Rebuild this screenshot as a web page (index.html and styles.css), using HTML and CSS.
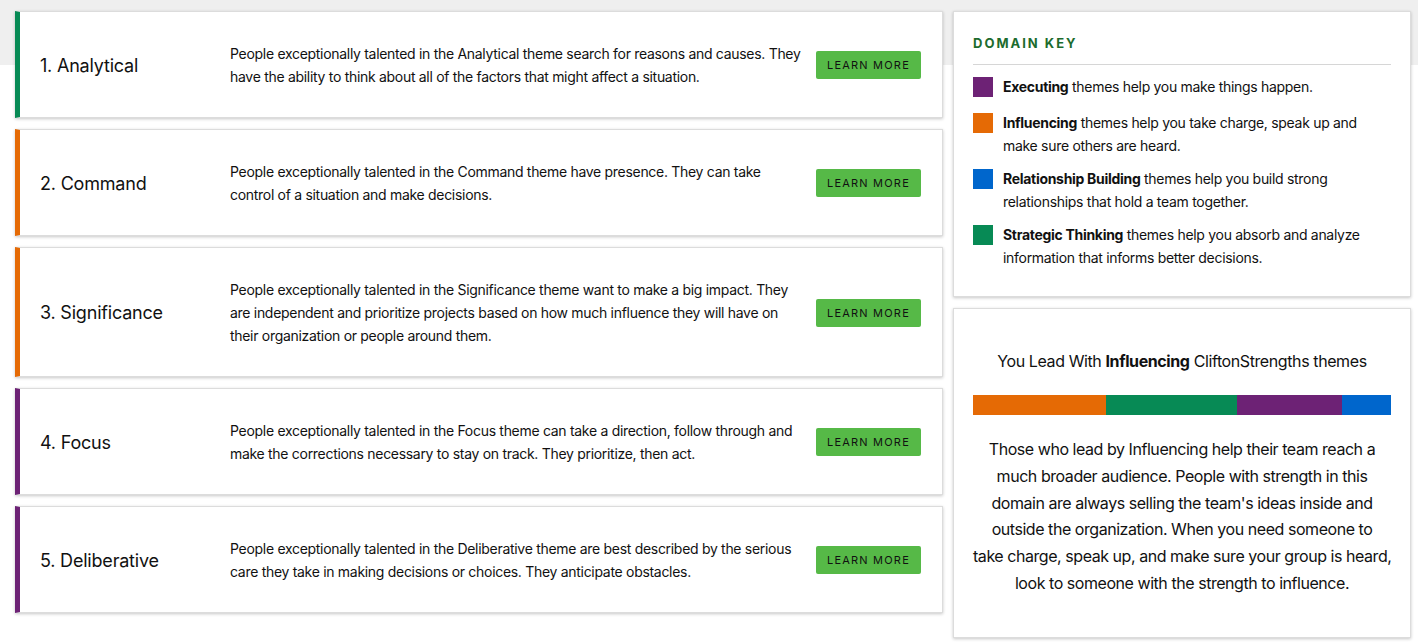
FILE: index.html
```html
<!DOCTYPE html>
<html lang="en">
<head>
  <meta charset="UTF-8">
  <meta name="viewport" content="width=device-width, initial-scale=1.0">
  <title>CliftonStrengths Themes</title>
  <link rel="stylesheet" href="styles.css">
</head>
<body>
  <div class="page">
    <div class="themes">
      <div class="theme strategic">
        <div class="theme-name">1. Analytical</div>
        <p class="theme-desc">People exceptionally talented in the Analytical theme search for reasons and causes. They have the ability to think about all of the factors that might affect a situation.</p>
        <a class="learn-btn" href="#">Learn more</a>
      </div>
      <div class="theme influencing">
        <div class="theme-name">2. Command</div>
        <p class="theme-desc">People exceptionally talented in the Command theme have presence. They can take control of a situation and make decisions.</p>
        <a class="learn-btn" href="#">Learn more</a>
      </div>
      <div class="theme influencing">
        <div class="theme-name">3. Significance</div>
        <p class="theme-desc">People exceptionally talented in the Significance theme want to make a big impact. They are independent and prioritize projects based on how much influence they will have on their organization or people around them.</p>
        <a class="learn-btn" href="#">Learn more</a>
      </div>
      <div class="theme executing">
        <div class="theme-name">4. Focus</div>
        <p class="theme-desc">People exceptionally talented in the Focus theme can take a direction, follow through and make the corrections necessary to stay on track. They prioritize, then act.</p>
        <a class="learn-btn" href="#">Learn more</a>
      </div>
      <div class="theme executing">
        <div class="theme-name">5. Deliberative</div>
        <p class="theme-desc">People exceptionally talented in the Deliberative theme are best described by the serious care they take in making decisions or choices. They anticipate obstacles.</p>
        <a class="learn-btn" href="#">Learn more</a>
      </div>
    </div>

    <div class="sidebar">
      <div class="panel domain-key">
        <h3>Domain Key</h3>
        <ul class="key-list">
          <li><span class="swatch executing"></span><span><b>Executing</b> themes help you make things happen.</span></li>
          <li><span class="swatch influencing"></span><span><b>Influencing</b> themes help you take charge, speak up and make sure others are heard.</span></li>
          <li><span class="swatch relationship"></span><span><b>Relationship Building</b> themes help you build strong relationships that hold a team together.</span></li>
          <li><span class="swatch strategic"></span><span><b>Strategic Thinking</b> themes help you absorb and analyze information that informs better decisions.</span></li>
        </ul>
      </div>

      <div class="panel lead">
        <h4>You Lead With <b>Influencing</b> CliftonStrengths themes</h4>
        <div class="domain-bar">
          <span class="influencing" style="width: 31.8%"></span>
          <span class="strategic" style="width: 31.4%"></span>
          <span class="executing" style="width: 25.1%"></span>
          <span class="relationship" style="width: 11.7%"></span>
        </div>
        <p>Those who lead by Influencing help their team reach a much broader audience. People with strength in this domain are always selling the team's ideas inside and outside the organization. When you need someone to <span class="nowrap">take charge, speak up, and make sure your group is heard,</span> look to someone with the strength to influence.</p>
      </div>
    </div>
  </div>
</body>
</html>
```

FILE: styles.css
```css
html {
  background: #fff;
}
body {
  margin: 0;
  font-family: Inter, "Noto Sans", sans-serif;
  color: #111;
  background: linear-gradient(#efefef, #efefef) no-repeat 0 0 / 100% 65px;
}
.page {
  display: flex;
  align-items: flex-start;
  gap: 10px;
  padding: 11px 7px 6px 15px;
}

/* theme cards */
.themes {
  width: 928px;
  display: flex;
  flex-direction: column;
  gap: 11px;
}
.theme {
  display: flex;
  align-items: center;
  background: #fff;
  border: 1px solid #dcdcdc;
  border-left: 5px solid #ccc;
  box-shadow: 0 1px 3px rgba(0, 0, 0, 0.22);
  padding: 30px 21px 29px 20px;
}
.theme.strategic { border-left-color: #078a55; }
.theme.influencing { border-left-color: #e56a05; }
.theme.executing { border-left-color: #6d2275; }
.theme-name {
  width: 190px;
  flex-shrink: 0;
  font-size: 18px;
  letter-spacing: -0.2px;
}
.theme-desc {
  flex: 1;
  margin: 0 12px 0 0;
  font-size: 14px;
  line-height: 23px;
  letter-spacing: -0.3px;
}
.learn-btn {
  flex-shrink: 0;
  width: 105px;
  height: 28px;
  line-height: 28px;
  text-align: center;
  background: #56b947;
  border-radius: 2px;
  color: #111;
  text-decoration: none;
  text-transform: uppercase;
  font-size: 11px;
  letter-spacing: 1.2px;
}

/* sidebar */
.sidebar {
  width: 458px;
  display: flex;
  flex-direction: column;
  gap: 11px;
}
.panel {
  background: #fff;
  border: 1px solid #dcdcdc;
  box-shadow: 0 1px 3px rgba(0, 0, 0, 0.22);
  padding: 0 19px;
}
.domain-key {
  padding-top: 23px;
  padding-bottom: 27px;
}
.domain-key h3 {
  margin: 0;
  padding-bottom: 13px;
  border-bottom: 1px solid #d6d6d6;
  color: #1c6b2d;
  font-size: 13px;
  font-weight: 700;
  letter-spacing: 2px;
  text-transform: uppercase;
}
.key-list {
  list-style: none;
  margin: 0;
  padding: 10px 0 0;
  display: flex;
  flex-direction: column;
  gap: 10px;
}
.key-list li {
  display: flex;
  gap: 10px;
  font-size: 14px;
  line-height: 23px;
  letter-spacing: -0.3px;
}
.key-list li:first-child {
  margin-bottom: 3px;
}
.swatch {
  flex-shrink: 0;
  width: 20px;
  height: 20px;
  margin-top: 2px;
}
.executing { background: #6d2275; }
.influencing { background: #e56a05; }
.relationship { background: #0066cc; }
.strategic { background: #078a55; }
.theme.executing, .theme.influencing, .theme.strategic { background: #fff; }

.lead {
  text-align: center;
  padding-top: 40px;
  padding-bottom: 40px;
}
.lead h4 {
  margin: 0 0 22px;
  font-size: 16px;
  font-weight: 400;
  line-height: 24px;
  letter-spacing: -0.4px;
}
.domain-bar {
  display: flex;
  height: 20px;
}
.domain-bar span {
  display: block;
}
.lead p {
  margin: 21px 0 0;
  font-size: 16px;
  line-height: 26.8px;
  letter-spacing: -0.45px;
}
.nowrap {
  white-space: nowrap;
}
```
